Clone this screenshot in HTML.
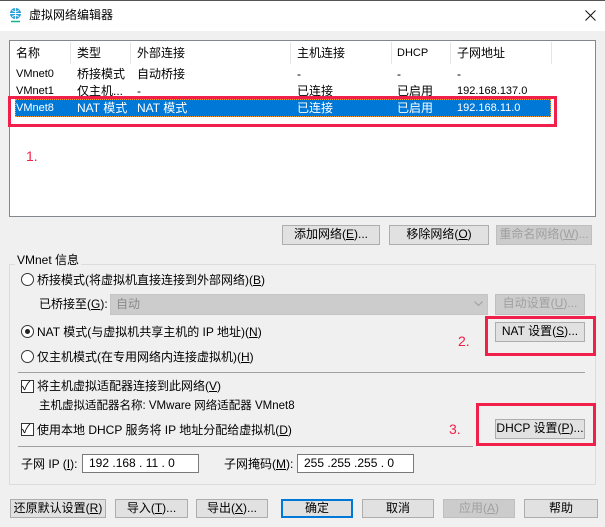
<!DOCTYPE html>
<html><head><meta charset="utf-8"><style>
*{box-sizing:border-box;margin:0;padding:0}
body{width:605px;height:527px;background:#f0f0f0;font-family:"Liberation Sans","Noto Sans CJK SC",sans-serif;font-size:12px;color:#000;position:relative;overflow:hidden}
.a{position:absolute;white-space:nowrap;line-height:16px}
.btn{position:absolute;background:#e1e1e1;border:1px solid #adadad;text-align:center;line-height:17px;font-size:12px}
.dis{color:#a0a0a0;background:#cccccc;border-color:#bfbfbf}
.red{position:absolute;border:3px solid #f0204a}
.rt{position:absolute;color:#f0204a;font-size:14px}
.radio{position:absolute;width:13px;height:13px;border:1px solid #333;border-radius:50%;background:#fff}
.chk{position:absolute;width:13px;height:13px;border:1px solid #333;background:#fff}
.inp{position:absolute;background:#fff;border:1px solid #7a7a7a;line-height:16px;padding-left:6px}
.sep{position:absolute;height:1px;background:#a0a0a0}
.cs{position:absolute;top:42px;width:1px;height:22px;background:#e5e5e5}
</style></head><body>
<div style="position:absolute;left:0;top:0;width:605px;height:31px;background:#fff;border-top:1px solid #555"></div>
<svg class="a" style="left:9px;top:7px" width="13" height="16" viewBox="0 0 13 16"><circle cx="6.5" cy="6.5" r="5.5" fill="#2a9fd8"/><path d="M1 6.5h11M6.5 1v11M3 3.5q3.5 2 7 0M3 9.5q3.5-2 7 0" stroke="#fff" stroke-width="1" fill="none"/><path d="M2 14.5h9" stroke="#1bb08b" stroke-width="1.5"/></svg>
<div class="a" style="left:29px;top:7px">虚拟网络编辑器</div>
<svg class="a" style="left:585px;top:10px" width="11" height="11" viewBox="0 0 11 11"><path d="M0.5 0.5l10 10M10.5 0.5l-10 10" stroke="#111" stroke-width="1"/></svg>

<div style="position:absolute;left:9px;top:40px;width:587px;height:177px;background:#fff;border:1px solid #828790"></div>
<div class="cs" style="left:70px"></div><div class="cs" style="left:130px"></div><div class="cs" style="left:290px"></div><div class="cs" style="left:391px"></div><div class="cs" style="left:450px"></div><div class="cs" style="left:551px"></div>
<div class="a" style="left:16px;top:45px">名称</div><div class="a" style="left:77px;top:45px">类型</div><div class="a" style="left:137px;top:45px">外部连接</div><div class="a" style="left:297px;top:45px">主机连接</div><div class="a" style="left:397px;top:45px;font-size:11px">DHCP</div><div class="a" style="left:457px;top:45px">子网地址</div>
<div class="a" style="left:16px;top:66px;font-size:11px">VMnet0</div><div class="a" style="left:77px;top:66px">桥接模式</div><div class="a" style="left:137px;top:66px">自动桥接</div><div class="a" style="left:297px;top:66px">-</div><div class="a" style="left:397px;top:66px">-</div><div class="a" style="left:457px;top:66px">-</div>
<div class="a" style="left:16px;top:83px;font-size:11px">VMnet1</div><div class="a" style="left:77px;top:83px">仅主机...</div><div class="a" style="left:137px;top:83px">-</div><div class="a" style="left:297px;top:83px">已连接</div><div class="a" style="left:397px;top:83px">已启用</div><div class="a" style="left:457px;top:83px;font-size:11px">192.168.137.0</div>
<div style="position:absolute;left:15px;top:99px;width:536px;height:18px;background:#0078d7;border:1px dotted #f0a030"></div>
<div class="a" style="left:16px;top:100px;font-size:11px;color:#fff">VMnet8</div><div class="a" style="left:77px;top:100px;color:#fff">NAT 模式</div><div class="a" style="left:137px;top:100px;color:#fff">NAT 模式</div><div class="a" style="left:297px;top:100px;color:#fff">已连接</div><div class="a" style="left:397px;top:100px;color:#fff">已启用</div><div class="a" style="left:457px;top:100px;font-size:11px;color:#fff">192.168.11.0</div>
<div class="red" style="left:8px;top:96px;width:549px;height:31px"></div>
<div class="rt" style="left:26px;top:148px">1.</div>

<div class="btn" style="left:282px;top:225px;width:98px;height:20px">添加网络(<u>E</u>)...</div>
<div class="btn" style="left:389px;top:225px;width:100px;height:20px">移除网络(<u>O</u>)</div>
<div class="btn dis" style="left:496px;top:225px;width:96px;height:20px">重命名网络(<u>W</u>)...</div>

<div style="position:absolute;left:9px;top:264px;width:587px;height:221px;border:1px solid #dcdcdc"></div>
<div class="a" style="left:15px;top:252px;background:#f0f0f0;padding:0 2px;font-size:12px">VMnet 信息</div>
<div class="radio" style="left:21px;top:273px"></div><div class="a" style="left:37px;top:272px">桥接模式(将虚拟机直接连接到外部网络)(<u>B</u>)</div>
<div class="a" style="left:39px;top:296px">已桥接至(<u>G</u>):</div>
<div style="position:absolute;left:110px;top:294px;width:378px;height:21px;background:#cccccc;border:1px solid #c4c4c4"></div>
<div class="a" style="left:116px;top:296px;color:#8a8a8a">自动</div>
<svg class="a" style="left:474px;top:301px" width="9" height="6" viewBox="0 0 9 6"><path d="M0.5 0.5l4 4 4-4" stroke="#a0a0a0" fill="none"/></svg>
<div class="btn dis" style="left:495px;top:294px;width:90px;height:21px">自动设置(<u>U</u>)...</div>
<div class="radio" style="left:21px;top:325px"></div><div style="position:absolute;left:25px;top:329px;width:5px;height:5px;border-radius:50%;background:#222"></div>
<div class="a" style="left:37px;top:324px">NAT 模式(与虚拟机共享主机的 IP 地址)(<u>N</u>)</div>
<div class="btn" style="left:495px;top:322px;width:90px;height:20px">NAT 设置(<u>S</u>)...</div>
<div class="red" style="left:485px;top:316px;width:111px;height:40px"></div>
<div class="rt" style="left:458px;top:333px">2.</div>
<div class="radio" style="left:21px;top:350px"></div><div class="a" style="left:37px;top:349px">仅主机模式(在专用网络内连接虚拟机)(<u>H</u>)</div>
<div class="sep" style="left:18px;top:372px;width:567px"></div>
<div class="chk" style="left:21px;top:380px"></div><div class="a" style="left:22px;top:378px;font-size:12px">✓</div>
<div class="a" style="left:37px;top:378px">将主机虚拟适配器连接到此网络(<u>V</u>)</div>
<div class="a" style="left:39px;top:398px;font-size:11.5px">主机虚拟适配器名称: VMware 网络适配器 VMnet8</div>
<div class="chk" style="left:21px;top:423px"></div><div class="a" style="left:22px;top:421px">✓</div>
<div class="a" style="left:37px;top:422px">使用本地 DHCP 服务将 IP 地址分配给虚拟机(<u>D</u>)</div>
<div class="btn" style="left:495px;top:419px;width:90px;height:20px">DHCP 设置(<u>P</u>)...</div>
<div class="red" style="left:476px;top:403px;width:120px;height:43px"></div>
<div class="rt" style="left:449px;top:421px">3.</div>
<div class="sep" style="left:18px;top:446px;width:455px"></div>
<div class="a" style="left:21px;top:456px">子网 IP (<u>I</u>):</div>
<div class="inp" style="left:82px;top:454px;width:117px;height:19px">192 .168 . 11  .  0</div>
<div class="a" style="left:224px;top:456px">子网掩码(<u>M</u>):</div>
<div class="inp" style="left:297px;top:454px;width:117px;height:19px">255 .255 .255 .  0</div>

<div class="btn" style="left:10px;top:499px;width:96px;height:19px">还原默认设置(<u>R</u>)</div>
<div class="btn" style="left:115px;top:499px;width:73px;height:19px">导入(<u>T</u>)...</div>
<div class="btn" style="left:196px;top:499px;width:72px;height:19px">导出(<u>X</u>)...</div>
<div class="btn" style="left:281px;top:499px;width:72px;height:19px;border:2px solid #0078d7;line-height:15px">确定</div>
<div class="btn" style="left:362px;top:499px;width:72px;height:19px">取消</div>
<div class="btn dis" style="left:443px;top:499px;width:72px;height:19px">应用(<u>A</u>)</div>
<div class="btn" style="left:524px;top:499px;width:74px;height:19px">帮助</div>
</body></html>
